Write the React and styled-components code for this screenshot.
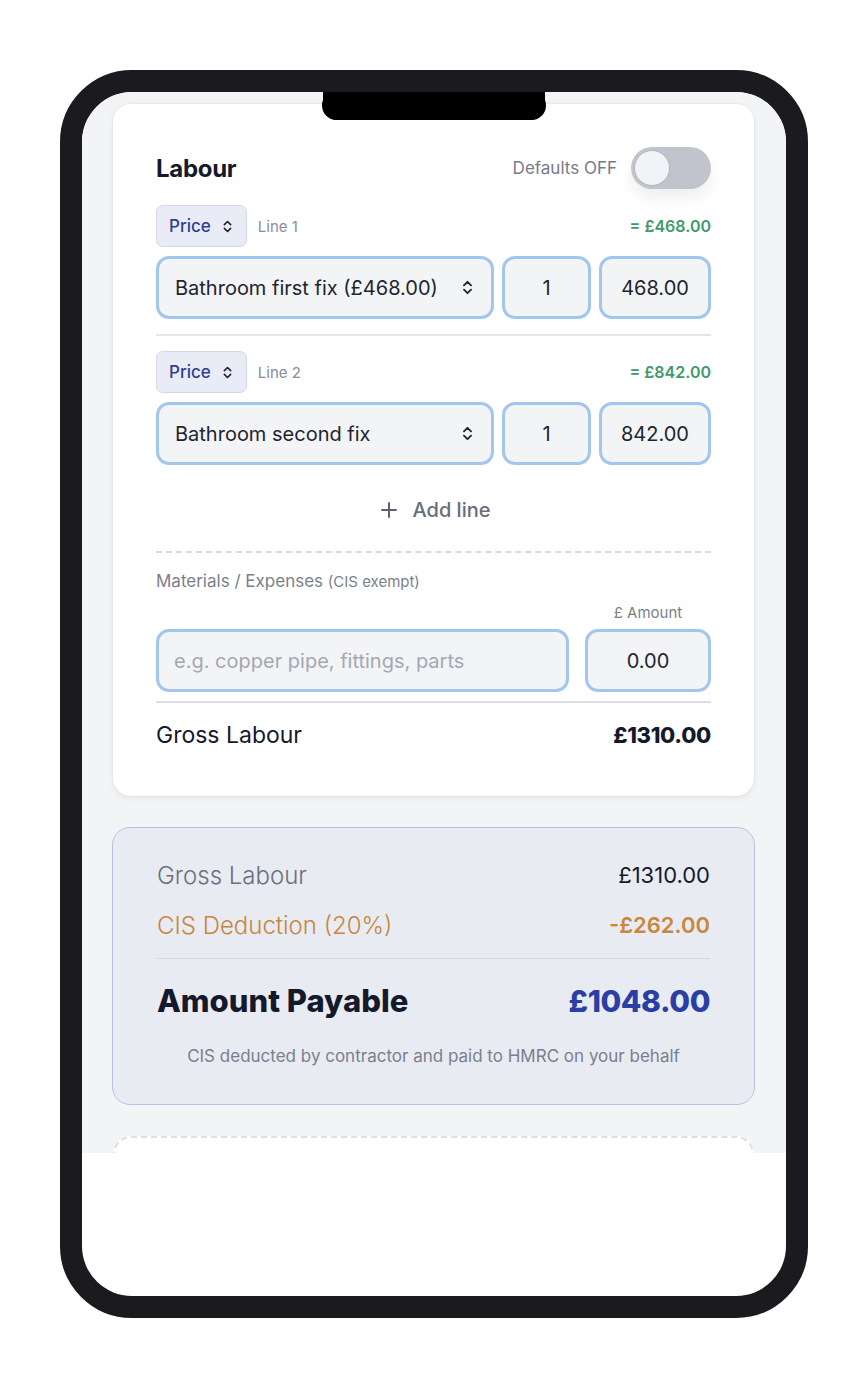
import React from "react"
import styled, { createGlobalStyle } from "styled-components"
import { ChevronsUpDown, Plus } from "lucide-react"

const GlobalStyle = createGlobalStyle`
  html, body {
    margin: 0;
    padding: 0;
    background: #ffffff;
  }
  body {
    font-family: Inter, "Noto Sans", "Liberation Sans", sans-serif;
    color: #141a2b;
  }
  * {
    box-sizing: border-box;
  }
`

const lines = [
  { id: 1, label: "Bathroom first fix (£468.00)", qty: "1", price: "468.00", total: "£468.00" },
  { id: 2, label: "Bathroom second fix", qty: "1", price: "842.00", total: "£842.00" },
]

const App = () => {
  return (
    <Page>
      <GlobalStyle />
      <Phone>
        <Screen>
          <Notch />
          <ScrollArea>
            <Card>
              <HeaderRow>
                <CardTitle>Labour</CardTitle>
                <ToggleWrap>
                  <ToggleLabel>Defaults OFF</ToggleLabel>
                  <Toggle>
                    <Knob />
                  </Toggle>
                </ToggleWrap>
              </HeaderRow>

              {lines.map((line, i) => (
                <LineBlock key={line.id} $first={i === 0}>
                  <LineMeta>
                    <MetaLeft>
                      <ModeChip>
                        Price
                        <ChevronsUpDown size={15} strokeWidth={2.6} color="#1f2430" />
                      </ModeChip>
                      <LineName>Line {line.id}</LineName>
                    </MetaLeft>
                    <LineTotal>= {line.total}</LineTotal>
                  </LineMeta>
                  <FieldRow>
                    <SelectField>
                      <span>{line.label}</span>
                      <ChevronsUpDown size={17} strokeWidth={2.6} color="#1f2430" />
                    </SelectField>
                    <Field $w="89px" $center>{line.qty}</Field>
                    <Field $w="112px" $center>{line.price}</Field>
                  </FieldRow>
                </LineBlock>
              ))}

              <AddLine>
                <Plus size={24} strokeWidth={2} color="#5d6272" />
                Add line
              </AddLine>

              <DashedRule />

              <SectionLabel>
                Materials / Expenses <small>(CIS exempt)</small>
              </SectionLabel>
              <AmountCaption>£ Amount</AmountCaption>
              <FieldRow $gap="16px" $top="7px">
                <Field $grow $placeholder>e.g. copper pipe, fittings, parts</Field>
                <Field $w="126px" $center>0.00</Field>
              </FieldRow>

              <GrossRow>
                <GrossLabel>Gross Labour</GrossLabel>
                <GrossValue>£1310.00</GrossValue>
              </GrossRow>
            </Card>

            <SummaryCard>
              <SummaryRow>
                <SummaryLabel $tone="#6b6f7d">Gross Labour</SummaryLabel>
                <SummaryValue>£1310.00</SummaryValue>
              </SummaryRow>
              <SummaryRow $tone="#c8873b">
                <SummaryLabel>CIS Deduction (20%)</SummaryLabel>
                <SummaryValue $weight={600}>-£262.00</SummaryValue>
              </SummaryRow>
              <SummaryRule />
              <PayableRow>
                <PayableLabel>Amount Payable</PayableLabel>
                <PayableValue>£1048.00</PayableValue>
              </PayableRow>
              <SummaryNote>CIS deducted by contractor and paid to HMRC on your behalf</SummaryNote>
            </SummaryCard>

            <NextCard />
          </ScrollArea>
        </Screen>
      </Phone>
    </Page>
  )
}

const Page = styled.div`
  width: 868px;
  height: 1387px;
  padding: 70px 60px 0;
  background: #ffffff;
`

const Phone = styled.div`
  width: 748px;
  height: 1248px;
  border: 22px solid #1b1b1f;
  border-radius: 72px;
  background: #1b1b1f;
`

const Screen = styled.div`
  position: relative;
  width: 100%;
  height: 100%;
  border-radius: 50px;
  overflow: hidden;
  background: #ffffff;
`

const Notch = styled.div`
  position: absolute;
  top: -1px;
  left: 241px;
  width: 222px;
  height: 29px;
  background: #000000;
  border-radius: 0 0 15px 15px / 0 0 14px 14px;
  z-index: 2;
  &::before,
  &::after {
    content: "";
    position: absolute;
    top: 0;
    width: 29px;
    height: 29px;
    border-radius: 50%;
    background: #000000;
  }
  &::before { left: -1px; }
  &::after { right: -1px; }
`

const ScrollArea = styled.div`
  height: 1061px;
  overflow: hidden;
  background: #f3f4f6;
  padding: 12px 32px 0 31px;
  display: flex;
  flex-direction: column;
  gap: 31px;
`

const Card = styled.div`
  background: #ffffff;
  border-radius: 18px;
  padding: 43px 43px 47px;
  box-shadow: 0 2px 6px rgba(20, 26, 43, 0.07), 0 0 0 1px rgba(20, 26, 43, 0.03);
`

const HeaderRow = styled.div`
  display: flex;
  align-items: center;
  justify-content: space-between;
  height: 42px;
`

const CardTitle = styled.h2`
  margin: 0;
  font-size: 24px;
  font-weight: 700;
  letter-spacing: -0.3px;
  color: #141a2b;
`

const ToggleWrap = styled.div`
  display: flex;
  align-items: center;
  gap: 14px;
`

const ToggleLabel = styled.span`
  font-size: 17px;
  color: #777b88;
`

const Toggle = styled.div`
  width: 80px;
  height: 42px;
  border-radius: 21px;
  background: #c2c4cd;
  padding: 3px;
  display: flex;
  align-items: center;
  box-shadow: 0 9px 14px rgba(20, 26, 43, 0.07);
`

const Knob = styled.div`
  width: 36px;
  height: 36px;
  border-radius: 50%;
  background: #f2f3f6;
  border: 1px solid #b1b4be;
`

const LineBlock = styled.div`
  margin-top: ${(p) => (p.$first ? "16px" : "15px")};
  padding-top: ${(p) => (p.$first ? "0" : "15px")};
  border-top: ${(p) => (p.$first ? "none" : "2px solid #e4e6ea")};
`

const LineMeta = styled.div`
  display: flex;
  align-items: center;
  justify-content: space-between;
`

const MetaLeft = styled.div`
  display: flex;
  align-items: center;
  gap: 11px;
`

const ModeChip = styled.div`
  height: 42px;
  padding: 0 11px 0 12px;
  display: flex;
  align-items: center;
  gap: 9px;
  border-radius: 7px;
  border: 1.5px solid #d6d9e3;
  background: #e9ebf6;
  color: #2c3f92;
  font-size: 17px;
  font-weight: 500;
`

const LineName = styled.span`
  font-size: 15px;
  color: #8a8e99;
`

const LineTotal = styled.span`
  font-size: 16px;
  font-weight: 600;
  color: #3f9a6b;
`

const FieldRow = styled.div`
  display: flex;
  gap: ${(p) => p.$gap || "8px"};
  margin-top: ${(p) => p.$top || "9px"};
`

const Field = styled.div`
  height: 63px;
  ${(p) => (p.$grow ? "flex: 1;" : `width: ${p.$w}; flex: none;`)}
  display: flex;
  align-items: center;
  justify-content: ${(p) => (p.$center ? "center" : "flex-start")};
  padding: 0 15px;
  border: 3px solid #a3c6ef;
  border-radius: 13px;
  background: #f3f4f6;
  font-size: 20px;
  color: ${(p) => (p.$placeholder ? "#a4a8b2" : "#1f2430")};
  white-space: nowrap;
`

const SelectField = styled(Field)`
  flex: 1;
  justify-content: space-between;
  padding: 0 15px 0 16px;
`

const AddLine = styled.div`
  margin-top: 22px;
  height: 46px;
  display: flex;
  align-items: center;
  justify-content: center;
  gap: 12px;
  font-size: 20px;
  font-weight: 500;
  color: #686d7c;
`

const DashedRule = styled.div`
  margin-top: 18px;
  border-top: 2px dashed #d9dbe0;
`

const SectionLabel = styled.div`
  margin-top: 18px;
  font-size: 17px;
  color: #7b7f8b;
  small {
    font-size: 15px;
  }
`

const AmountCaption = styled.div`
  margin-top: 12px;
  width: 126px;
  margin-left: auto;
  text-align: center;
  font-size: 15px;
  color: #7b7f8b;
`

const GrossRow = styled.div`
  margin-top: 9px;
  padding-top: 18px;
  border-top: 2px solid #dcdee3;
  display: flex;
  align-items: center;
  justify-content: space-between;
`

const GrossLabel = styled.span`
  font-size: 23px;
  color: #141a2b;
`

const GrossValue = styled.span`
  font-size: 22px;
  font-weight: 800;
  letter-spacing: -0.3px;
  color: #141a2b;
`

const SummaryCard = styled.div`
  margin: 0 -1px;
  padding: 32px 44px 38px;
  border: 1.5px solid #b8c0e6;
  border-radius: 18px;
  background: #e9ebf3;
`

const SummaryRow = styled.div`
  display: flex;
  align-items: center;
  justify-content: space-between;
  height: 30px;
  color: ${(p) => p.$tone || "#141a2b"};
  & + & {
    margin-top: 20px;
  }
`

const SummaryLabel = styled.span`
  font-size: 24px;
  font-weight: 300;
  color: ${(p) => p.$tone || "inherit"};
`

const SummaryValue = styled.span`
  font-size: 22px;
  font-weight: ${(p) => p.$weight || 400};
`

const SummaryRule = styled.div`
  margin-top: 18px;
  border-top: 1.5px solid #d3d6e0;
`

const PayableRow = styled.div`
  margin-top: 23px;
  display: flex;
  align-items: center;
  justify-content: space-between;
`

const PayableLabel = styled.span`
  font-size: 31px;
  font-weight: 800;
  letter-spacing: 0;
  color: #141a2b;
`

const PayableValue = styled.span`
  font-size: 30px;
  font-weight: 800;
  letter-spacing: -0.4px;
  color: #2a3ea3;
`

const SummaryNote = styled.p`
  margin: 27px 0 0;
  text-align: center;
  font-size: 17px;
  color: #7b7f8b;
`

const NextCard = styled.div`
  flex: none;
  height: 120px;
  background: #ffffff;
  border: 2px dashed #dcdfe5;
  border-bottom: none;
  border-radius: 18px 18px 0 0;
`

export default App
